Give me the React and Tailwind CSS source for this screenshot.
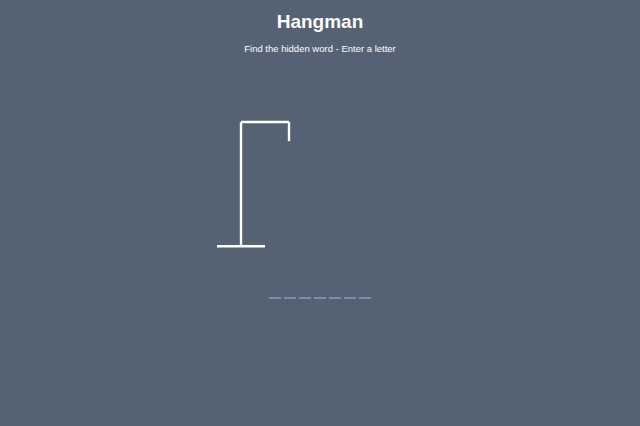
const letters = ['', '', '', '', '', '', ''];

const Figure = () => (
  <svg width="120" height="150" viewBox="0 0 200 250" className="block">
    <g stroke="#ffffff" strokeWidth="4" strokeLinecap="butt" fill="none">
      {/* rod */}
      <line x1="60" y1="20" x2="140" y2="20" />
      <line x1="140" y1="20" x2="140" y2="52" />
      <line x1="60" y1="20" x2="60" y2="227" />
      <line x1="20" y1="227" x2="100" y2="227" />
    </g>
  </svg>
);

export default function App() {
  return (
    <div className="min-h-[426px] w-full bg-[#546274] text-white flex flex-col items-center font-['Liberation_Sans',Arial,sans-serif]">
      <h1 className="mt-[12px] text-[19px] leading-none font-bold">Hangman</h1>
      <p className="mt-[13px] text-[9.5px] leading-[10px]">Find the hidden word - Enter a letter</p>

      <div className="mt-[56px] flex justify-center">
        <Figure />
        <div className="w-[110px]" />
      </div>

      <div className="mt-[37px] flex gap-[3px]">
        {letters.map((l, i) => (
          <span key={i} className="w-[12px] h-[2px] bg-[#6d93b8]">{l}</span>
        ))}
      </div>
    </div>
  );
}
